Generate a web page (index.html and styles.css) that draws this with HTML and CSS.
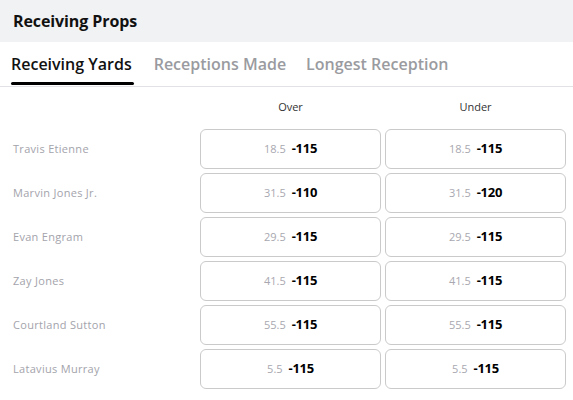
FILE: index.html
```html
<!DOCTYPE html>
<html>
<head>
<meta charset="utf-8">
<link rel="stylesheet" href="styles.css">
</head>
<body>
<div class="header"><h1 class="title">Receiving Props</h1></div>
<nav class="tabs">
  <div class="tab active">Receiving Yards</div>
  <div class="tab">Receptions Made</div>
  <div class="tab">Longest Reception</div>
</nav>
<div class="table">
  <div class="colhead"></div>
  <div class="colhead">Over</div>
  <div class="colhead">Under</div>

  <div class="name">Travis Etienne</div>
  <div class="bet"><span class="line">18.5</span><span class="odds">-115</span></div>
  <div class="bet"><span class="line">18.5</span><span class="odds">-115</span></div>

  <div class="name">Marvin Jones Jr.</div>
  <div class="bet"><span class="line">31.5</span><span class="odds">-110</span></div>
  <div class="bet"><span class="line">31.5</span><span class="odds">-120</span></div>

  <div class="name">Evan Engram</div>
  <div class="bet"><span class="line">29.5</span><span class="odds">-115</span></div>
  <div class="bet"><span class="line">29.5</span><span class="odds">-115</span></div>

  <div class="name">Zay Jones</div>
  <div class="bet"><span class="line">41.5</span><span class="odds">-115</span></div>
  <div class="bet"><span class="line">41.5</span><span class="odds">-115</span></div>

  <div class="name">Courtland Sutton</div>
  <div class="bet"><span class="line">55.5</span><span class="odds">-115</span></div>
  <div class="bet"><span class="line">55.5</span><span class="odds">-115</span></div>

  <div class="name">Latavius Murray</div>
  <div class="bet"><span class="line">5.5</span><span class="odds">-115</span></div>
  <div class="bet"><span class="line">5.5</span><span class="odds">-115</span></div>
</div>
</body>
</html>
```
FILE: styles.css
```css
* { box-sizing: border-box; }
html, body { margin: 0; padding: 0; background: #fff; }
body { font-family: "Open Sans", "Noto Sans", sans-serif; color: #111; width: 573px; }

.header {
  background: #f1f2f4;
  height: 42px;
  display: flex;
  align-items: center;
  padding-left: 13px;
}
.title {
  margin: 0;
  font-size: 16px;
  font-weight: 700;
  color: #111;
  letter-spacing: -0.1px;
}

.tabs {
  display: flex;
  gap: 20px;
  padding: 0 11px;
  height: 45px;
  border-bottom: 1px solid #e2e2e6;
  align-items: stretch;
}
.tab {
  font-size: 16px;
  font-weight: 600;
  color: #9a9ba0;
  display: flex;
  align-items: center;
  position: relative;
}
.tab.active { color: #111; padding-right: 2px; }
.tab.active::after {
  content: "";
  position: absolute;
  left: 0; right: 0;
  bottom: 1px;
  height: 3px;
  border-radius: 2px;
  background: #000;
}

.table {
  display: grid;
  grid-template-columns: 196px 181px 181px;
  column-gap: 4px;
  row-gap: 4px;
  grid-auto-rows: 40px;
  grid-template-rows: 38px;
}
.colhead {
  font-size: 11px;
  color: #333;
  display: flex;
  align-items: center;
  justify-content: center;
}
.name {
  font-size: 11px;
  letter-spacing: 0.3px;
  color: #a3a3ab;
  padding-left: 13px;
  display: flex;
  align-items: center;
  padding-bottom: 2px;
}
.bet {
  border: 1px solid #cacaca;
  border-radius: 6px;
  display: flex;
  align-items: center;
  justify-content: center;
  gap: 6px;
  padding-bottom: 2px;
}
.line {
  font-size: 11px;
  color: #a8a8b0;
}
.odds {
  font-size: 13px;
  font-weight: 700;
  color: #000;
  letter-spacing: -0.3px;
}
```
